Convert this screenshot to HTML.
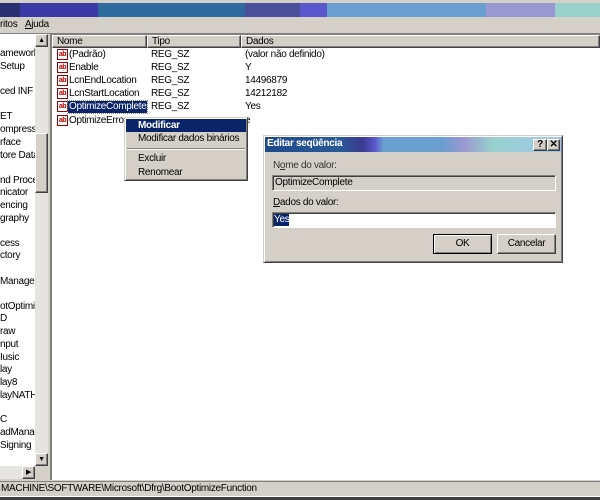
<!DOCTYPE html>
<html><head><meta charset="utf-8"><style>
*{margin:0;padding:0;box-sizing:border-box}
body{width:600px;height:500px;overflow:hidden;background:#d4d0c8;font-family:"Liberation Sans",sans-serif;font-size:10px;letter-spacing:-0.3px;color:#000;position:relative}
.a{position:absolute;white-space:nowrap}
.t{position:absolute;left:0;white-space:nowrap;line-height:13px}
.ico{position:absolute;width:11px;height:11px;border:1px solid #900;background:#fff;font-size:7px;font-weight:bold;color:#b00;line-height:9px;text-align:center;letter-spacing:-0.5px}
.btn{position:absolute;background:#d4d0c8;border:1px solid;border-color:#fff #404040 #404040 #fff;box-shadow:inset -1px -1px #808080;text-align:center;line-height:18px}
</style></head><body>
<div class="a" style="left:0;top:0;width:600px;height:3px;background:#d4d0c8"></div>
<div class="a" style="left:0;top:3px;width:20px;height:14px;background:#2a2f72"></div>
<div class="a" style="left:20px;top:3px;width:78px;height:14px;background:#3a3aa6"></div>
<div class="a" style="left:98px;top:3px;width:147px;height:14px;background:#2e6aa0"></div>
<div class="a" style="left:245px;top:3px;width:55px;height:14px;background:#4a4f9c"></div>
<div class="a" style="left:300px;top:3px;width:27px;height:14px;background:#5a56cc"></div>
<div class="a" style="left:327px;top:3px;width:159px;height:14px;background:#6a9ed0"></div>
<div class="a" style="left:486px;top:3px;width:69px;height:14px;background:#9a98d0"></div>
<div class="a" style="left:555px;top:3px;width:45px;height:14px;background:#98d0cc"></div>
<div class="a" style="left:0;top:19px">ritos&nbsp;&nbsp;&nbsp;<u>A</u>juda</div>
<div class="a" style="left:0;top:33px;width:600px;height:1px;background:#808080"></div>
<div class="a" style="left:0;top:34px;width:35px;height:432px;background:#fff;overflow:hidden">
<div class="t" style="top:13px">amework</div>
<div class="t" style="top:26px">Setup</div>
<div class="t" style="top:51px">ced INF S</div>
<div class="t" style="top:76px">ET</div>
<div class="t" style="top:89px">ompressi</div>
<div class="t" style="top:102px">rface</div>
<div class="t" style="top:115px">tore Data</div>
<div class="t" style="top:140px">nd Proce</div>
<div class="t" style="top:152px">nicator</div>
<div class="t" style="top:165px">encing</div>
<div class="t" style="top:178px">graphy</div>
<div class="t" style="top:203px">cess</div>
<div class="t" style="top:215px">ctory</div>
<div class="t" style="top:241px">Manager</div>
<div class="t" style="top:266px">otOptimiz</div>
<div class="t" style="top:278px">D</div>
<div class="t" style="top:291px">raw</div>
<div class="t" style="top:304px">nput</div>
<div class="t" style="top:317px">Iusic</div>
<div class="t" style="top:329px">lay</div>
<div class="t" style="top:342px">lay8</div>
<div class="t" style="top:355px">layNATHe</div>
<div class="t" style="top:379px">C</div>
<div class="t" style="top:392px">adManag</div>
<div class="t" style="top:405px">Signing</div>
</div>
<div class="a" style="left:35px;top:34px;width:13px;height:432px;background:#e6e4e0"></div>
<div class="btn" style="left:35px;top:34px;width:13px;height:13px;line-height:11px;font-size:7px">▲</div>
<div class="btn" style="left:35px;top:133px;width:13px;height:60px"></div>
<div class="btn" style="left:35px;top:453px;width:13px;height:13px;line-height:11px;font-size:7px">▼</div>
<div class="a" style="left:0;top:466px;width:35px;height:13px;background:#e6e4e0"></div>
<div class="btn" style="left:22px;top:466px;width:13px;height:13px;line-height:11px;font-size:7px">▶</div>
<div class="a" style="left:50px;top:34px;width:550px;height:446px;background:#fff;border-left:2px solid #808080;border-top:1px solid #808080"></div>
<div class="a" style="left:52px;top:35px;width:548px;height:13px;background:#d4d0c8;border-bottom:1px solid #808080"></div>
<div class="btn" style="left:52px;top:35px;width:95px;height:13px;line-height:11px;text-align:left;padding-left:4px">Nome</div>
<div class="btn" style="left:147px;top:35px;width:94px;height:13px;line-height:11px;text-align:left;padding-left:4px">Tipo</div>
<div class="btn" style="left:241px;top:35px;width:359px;height:13px;line-height:11px;text-align:left;padding-left:4px">Dados</div>
<div class="ico" style="left:57px;top:49px">ab</div><div class="a" style="left:69px;top:49px">(Padrão)</div><div class="a" style="left:151px;top:49px">REG_SZ</div><div class="a" style="left:245px;top:49px">(valor não definido)</div>
<div class="ico" style="left:57px;top:62px">ab</div><div class="a" style="left:69px;top:62px">Enable</div><div class="a" style="left:151px;top:62px">REG_SZ</div><div class="a" style="left:245px;top:62px">Y</div>
<div class="ico" style="left:57px;top:75px">ab</div><div class="a" style="left:69px;top:75px">LcnEndLocation</div><div class="a" style="left:151px;top:75px">REG_SZ</div><div class="a" style="left:245px;top:75px">14496879</div>
<div class="ico" style="left:57px;top:88px">ab</div><div class="a" style="left:69px;top:88px">LcnStartLocation</div><div class="a" style="left:151px;top:88px">REG_SZ</div><div class="a" style="left:245px;top:88px">14212182</div>
<div class="ico" style="left:57px;top:101px">ab</div><div class="a" style="left:68px;top:101px;background:#0a246a;color:#fff;padding:0 1px;outline:1px dotted #888;line-height:12px">OptimizeComplete</div><div class="a" style="left:151px;top:101px">REG_SZ</div><div class="a" style="left:245px;top:101px">Yes</div>
<div class="ico" style="left:57px;top:115px">ab</div><div class="a" style="left:69px;top:115px">OptimizeError</div><div class="a" style="left:245px;top:115px">e</div>
<div class="a" style="left:124px;top:117px;width:124px;height:64px;background:#d4d0c8;border:1px solid;border-color:#d4d0c8 #404040 #404040 #d4d0c8;box-shadow:inset 1px 1px #fff,inset -1px -1px #808080"></div>
<div class="a" style="left:126px;top:119px;width:120px;height:13px;background:#0a246a"></div>
<div class="a" style="left:138px;top:120px;color:#fff;font-weight:bold">Modificar</div>
<div class="a" style="left:138px;top:133px">Modificar dados binários</div>
<div class="a" style="left:127px;top:148px;width:118px;height:2px;border-top:1px solid #808080;border-bottom:1px solid #fff"></div>
<div class="a" style="left:138px;top:153px">Excluir</div>
<div class="a" style="left:138px;top:167px">Renomear</div>
<div class="a" style="left:263px;top:135px;width:300px;height:128px;background:#d4d0c8;border:1px solid;border-color:#d4d0c8 #404040 #404040 #d4d0c8;box-shadow:inset 1px 1px #fff,inset -1px -1px #808080"></div>
<div class="a" style="left:265px;top:137px;width:296px;height:15px;background:linear-gradient(90deg,#1e4a8a 0,#2a5a98 25%,#3a3a90 33%,#5a56cc 37%,#6a9ed0 40%,#6a9ed0 60%,#9a98d0 67%,#98d0cc 77%,#a0c8f0 100%)"></div>
<div class="a" style="left:267px;top:138px;color:#fff;font-weight:bold">Editar seqüência</div>
<div class="btn" style="left:533px;top:139px;width:14px;height:12px;line-height:10px;font-weight:bold">?</div>
<div class="btn" style="left:547px;top:139px;width:13px;height:12px;line-height:10px;font-weight:bold">✕</div>
<div class="a" style="left:273px;top:160px;color:#333">N<u>o</u>me do valor:</div>
<div class="a" style="left:272px;top:175px;width:284px;height:16px;border:1px solid;border-color:#808080 #fff #fff #808080;box-shadow:inset 1px 1px #404040"></div>
<div class="a" style="left:275px;top:177px">OptimizeComplete</div>
<div class="a" style="left:273px;top:197px"><u>D</u>ados do valor:</div>
<div class="a" style="left:272px;top:212px;width:284px;height:16px;background:#fff;border:1px solid;border-color:#808080 #fff #fff #808080;box-shadow:inset 1px 1px #404040"></div>
<div class="a" style="left:274px;top:214px;background:#0a246a;color:#fff;line-height:12px">Yes</div>
<div class="btn" style="left:433px;top:234px;width:59px;height:20px;border-color:#000;box-shadow:inset 1px 1px #fff,inset -1px -1px #808080">OK</div>
<div class="btn" style="left:497px;top:234px;width:59px;height:20px">Cancelar</div>
<div class="a" style="left:0;top:481px;width:600px;height:16px;border-top:1px solid #808080;border-bottom:1px solid #fff;padding-left:1px;line-height:14px">MACHINE\SOFTWARE\Microsoft\Dfrg\BootOptimizeFunction</div>
<div class="a" style="left:0;top:497px;width:600px;height:3px;background:#404040"></div>
</body></html>
